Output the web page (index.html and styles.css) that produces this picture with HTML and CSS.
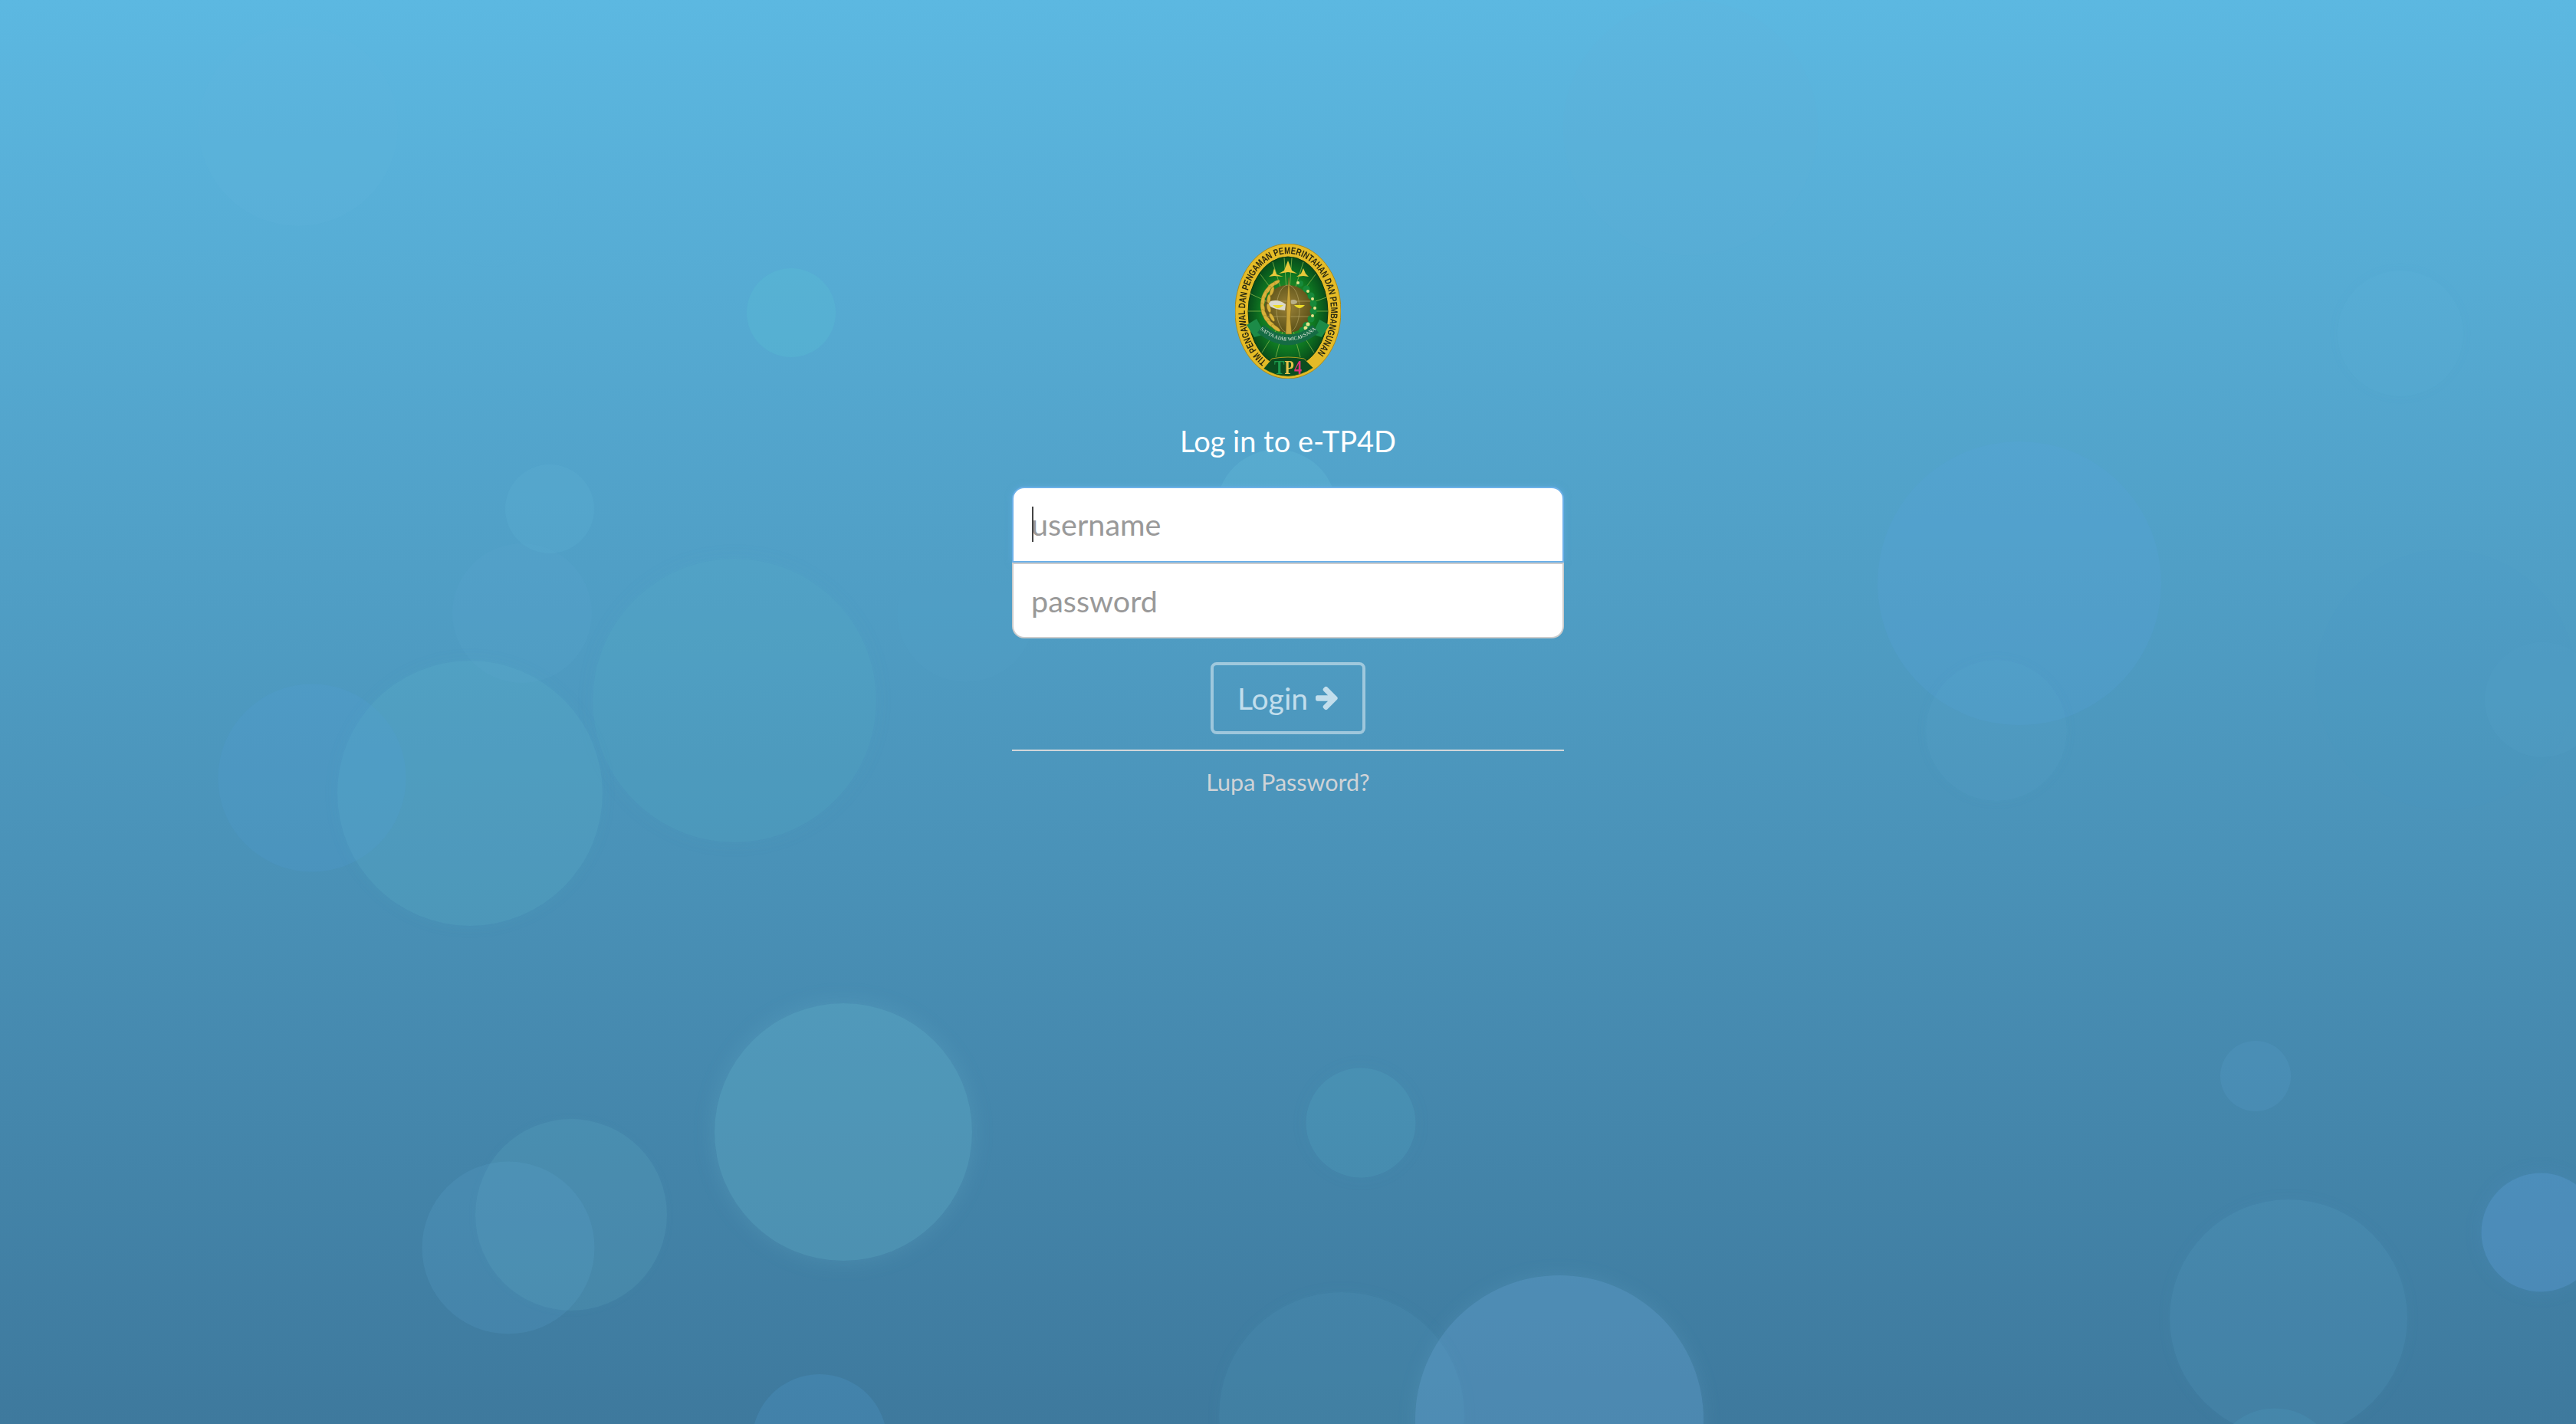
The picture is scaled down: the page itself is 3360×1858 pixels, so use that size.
FILE: index.html
```html
<!DOCTYPE html>
<html>
<head lang="en">
    <meta charset="UTF-8">
    <title>Login e-TP4D</title>
    <link rel="stylesheet" href="styles.css">
</head>
<body>
    <div class="bubbles">
        <div class="bubble b1"></div>
        <div class="bubble b2"></div>
        <div class="bubble b3"></div>
        <div class="bubble b4"></div>
        <div class="bubble b5"></div>
        <div class="bubble b6"></div>
        <div class="bubble b7"></div>
        <div class="bubble b8"></div>
        <div class="bubble b9"></div>
        <div class="bubble b10"></div>
        <div class="bubble b11"></div>
        <div class="bubble b12"></div>
        <div class="bubble b13"></div>
        <div class="bubble b14"></div>
        <div class="bubble b15"></div>
        <div class="bubble b16"></div>
        <div class="bubble b17"></div>
        <div class="bubble b18"></div>
        <div class="bubble b19"></div>
        <div class="bubble b20"></div>
        <div class="bubble b21"></div>
        <div class="bubble b22"></div>
        <div class="bubble b23"></div>
        <div class="bubble b24"></div>
        <div class="bubble b25"></div>
        <div class="bubble b26"></div>
        <div class="bubble b27"></div>
    </div>

    <div class="login-box">
        <svg class="logo" viewBox="51 28 138 176">
            <defs>
                <radialGradient id="greenFill" cx="50%" cy="50%" r="55%">
                    <stop offset="0" stop-color="#3f9a2c"/>
                    <stop offset="0.6" stop-color="#0f7a22"/>
                    <stop offset="1" stop-color="#053f18"/>
                </radialGradient>
                <radialGradient id="globeFill" cx="50%" cy="45%" r="55%">
                    <stop offset="0" stop-color="#9a8238"/>
                    <stop offset="1" stop-color="#5a5018"/>
                </radialGradient>
                <path id="rimPath" d="M92,181 A56,75 0 1 1 148,181"/>
                <path id="ribbonPath" d="M84,139 Q120,168 156,139"/>
            </defs>
            <ellipse cx="120" cy="116" rx="69" ry="88" fill="#e4bb27" stroke="#a98a1c" stroke-width="1"/>
            <ellipse cx="120" cy="117" rx="52" ry="72" fill="url(#greenFill)" stroke="#0b3a12" stroke-width="1"/>
            <text class="rim-text"><textPath href="#rimPath" textLength="338" lengthAdjust="spacingAndGlyphs">TIM PENGAWAL DAN PENGAMAN PEMERINTAHAN DAN PEMBANGUNAN</textPath></text>
            <g stroke="#86b84a" stroke-width="0.8">
                <line x1="120" y1="116" x2="115" y2="46"/>
                <line x1="120" y1="116" x2="125" y2="46"/>
                <line x1="120" y1="116" x2="100" y2="52"/>
                <line x1="120" y1="116" x2="140" y2="52"/>
                <line x1="120" y1="116" x2="84" y2="68"/>
                <line x1="120" y1="116" x2="156" y2="68"/>
                <line x1="120" y1="116" x2="70" y2="93"/>
                <line x1="120" y1="116" x2="170" y2="98"/>
                <line x1="120" y1="116" x2="68" y2="116"/>
                <line x1="120" y1="116" x2="172" y2="116"/>
                <line x1="120" y1="116" x2="86" y2="170"/>
                <line x1="120" y1="116" x2="154" y2="170"/>
                <line x1="120" y1="116" x2="104" y2="176"/>
                <line x1="120" y1="116" x2="136" y2="176"/>
            </g>
            <g fill="#e8c93a">
                <path d="M120,50 L125,63 L132,67 L120,65 L108,67 L115,63 Z"/>
                <path d="M102,60 L105,68 L114,71 L102,70 L95,71 L100,67 Z"/>
                <path d="M140,60 L143,67 L147,71 L140,70 L131,71 L137,67 Z"/>
            </g>
            <circle cx="120" cy="113" r="31" fill="url(#globeFill)"/>
            <g fill="none" stroke="#c8b877" stroke-width="0.5">
                <ellipse cx="120" cy="113" rx="15" ry="31"/>
                <line x1="90" y1="103" x2="150" y2="103"/>
                <line x1="90" y1="123" x2="150" y2="123"/>
            </g>
            <path d="M95,104 Q106,99 117,107 L116,115 Q103,114 95,109 Z" fill="#dcdacb"/>
            <ellipse cx="127" cy="104" rx="5" ry="3" fill="#b9b08a"/>
            <path d="M100,108 L114,108 Q107,116 100,108 Z" fill="#ecdc28"/>
            <path d="M128,108 L142,108 Q135,116 128,108 Z" fill="#ecdc28"/>
            <path d="M121,72 L124,112 L123,126 L125,146 L117,146 L118,126 L118,112 Z" fill="#c9a53a" stroke="#6e5a18" stroke-width="0.5"/>
            <g class="wheat" fill="#d8b23a" stroke="#8a6d1a" stroke-width="0.3">
                <ellipse cx="104" cy="79" rx="6" ry="2.4" transform="rotate(-30 104 79)"/>
                <ellipse cx="98" cy="83" rx="6.5" ry="2.5" transform="rotate(-40 98 83)"/>
                <ellipse cx="93" cy="89" rx="7" ry="2.6" transform="rotate(-50 93 89)"/>
                <ellipse cx="89" cy="96" rx="7" ry="2.6" transform="rotate(-65 89 96)"/>
                <ellipse cx="87" cy="104" rx="7" ry="2.6" transform="rotate(-80 87 104)"/>
                <ellipse cx="87" cy="112" rx="7" ry="2.6" transform="rotate(80 87 112)"/>
                <ellipse cx="89" cy="120" rx="7" ry="2.6" transform="rotate(65 89 120)"/>
                <ellipse cx="93" cy="127" rx="7" ry="2.6" transform="rotate(50 93 127)"/>
                <ellipse cx="98" cy="133" rx="7" ry="2.6" transform="rotate(40 98 133)"/>
                <ellipse cx="99" cy="90" rx="6" ry="2.2" transform="rotate(-70 99 90)"/>
                <ellipse cx="95" cy="100" rx="6" ry="2.2" transform="rotate(-85 95 100)"/>
                <ellipse cx="95" cy="112" rx="6" ry="2.2" transform="rotate(75 95 112)"/>
                <ellipse cx="99" cy="124" rx="6" ry="2.2" transform="rotate(60 99 124)"/>
                <ellipse cx="104" cy="138" rx="7" ry="2.4" transform="rotate(35 104 138)"/>
            </g>
            <g fill="#178a3a">
                <circle cx="136" cy="80" r="4"/>
                <circle cx="144" cy="87" r="4.5"/>
                <circle cx="150" cy="96" r="4.5"/>
                <circle cx="153" cy="106" r="4.5"/>
                <circle cx="153" cy="116" r="4.5"/>
                <circle cx="150" cy="126" r="4.5"/>
                <circle cx="144" cy="135" r="5"/>
                <circle cx="139" cy="141" r="4.5"/>
            </g>
            <g fill="#e8e28a">
                <circle cx="133" cy="79" r="2"/>
                <circle cx="146" cy="90" r="2"/>
                <circle cx="152" cy="100" r="2"/>
                <circle cx="155" cy="112" r="2"/>
                <circle cx="152" cy="122" r="2"/>
                <circle cx="146" cy="133" r="2.5"/>
                <circle cx="143" cy="138" r="2.5"/>
            </g>
            <path d="M66,134 L79,126 L90,146 L76,150 Z" fill="#1c8b48"/>
            <path d="M174,134 L161,127 L152,146 L164,150 Z" fill="#1c8b48"/>
            <use href="#ribbonPath" fill="none" stroke="#156b44" stroke-width="13"/>
            <text class="ribbon-text"><textPath href="#ribbonPath" startOffset="50%" text-anchor="middle">SATYA ADHI WICAKSANA</textPath></text>
            <path d="M88,191 L99,178 Q120,174 141,178 L153,190 Q120,212 88,191 Z" fill="#0a4d1f" stroke="#d8b020" stroke-width="0.8"/>
            <text class="tp4" x="102" y="198" textLength="36" lengthAdjust="spacingAndGlyphs"><tspan fill="#1d9a4c">T</tspan><tspan fill="#e5c34a">P</tspan><tspan fill="#e0307a">4</tspan></text>
        </svg>

        <h1 class="login-title">Log in to e-TP4D</h1>

        <form class="login-form">
            <div class="field-group">
                <input class="field field-focus" type="text" placeholder="username">
                <span class="caret"></span>
                <input class="field field-last" type="password" placeholder="password">
            </div>
            <button class="btn-login" type="button">Login
                <svg class="arrow" viewBox="0 0 1536 1792"><path fill="currentColor" d="M1472 960q0 54-37 91l-651 651q-39 37-91 37-51 0-90-37l-75-75q-38-38-38-91t38-91l293-293h-704q-52 0-84.5-37.5t-32.5-90.5v-128q0-53 32.5-90.5t84.5-37.5h704l-293-294q-38-36-38-90t38-90l75-75q38-38 90-38 53 0 91 38l651 651q37 35 37 90z" transform="translate(0 -64)"/></svg>
            </button>
            <hr class="divider">
            <a class="forgot" href="#">Lupa Password?</a>
        </form>
    </div>
</body>
</html>
```

FILE: styles.css
```css
*{
    margin: 0;
    padding: 0;
    box-sizing: border-box;
}
html, body{
    height: 100%;
}
body{
    position: relative;
    overflow: hidden;
    font-family: "Lato", "Noto Sans", sans-serif;
    background: linear-gradient(180deg, #5cb8e1 0%, #3e799d 100%);
}

/* background bubbles */
.bubbles{
    position: absolute;
    top: 0;
    left: 0;
    right: 0;
    bottom: 0;
    overflow: hidden;
}
.bubble{
    position: absolute;
    border-radius: 50%;
    transform: translate(-50%, -50%);
}
.b1{ left: 389px; top: 165px; width: 260px; height: 260px; background: rgba(110,190,230,.1); }
.b2{ left: 639px; top: 258px; width: 180px; height: 180px; background: rgba(90,185,220,.04); }
.b3{ left: 1032px; top: 408px; width: 116px; height: 116px; background: rgba(90,200,215,.22); }
.b4{ left: 717px; top: 664px; width: 116px; height: 116px; background: rgba(110,190,225,.13); }
.b5{ left: 681px; top: 800px; width: 182px; height: 182px; background: rgba(100,175,215,.12); }
.b6{ left: 958px; top: 914px; width: 370px; height: 370px; background: rgba(90,180,200,.16); box-shadow: 0 0 24px rgba(90,180,200,.08); }
.b7{ left: 613px; top: 1035px; width: 346px; height: 346px; background: rgba(95,185,205,.2); box-shadow: 0 0 20px rgba(95,185,205,.08); }
.b8{ left: 407px; top: 1015px; width: 245px; height: 245px; background: rgba(85,165,225,.14); }
.b9{ left: 1260px; top: 800px; width: 180px; height: 180px; background: rgba(100,170,220,.05); }
.b10{ left: 1665px; top: 665px; width: 157px; height: 157px; background: rgba(110,200,225,.2); }
.b11{ left: 1100px; top: 1477px; width: 336px; height: 336px; background: rgba(110,195,215,.25); box-shadow: 0 0 30px rgba(130,205,225,.16); }
.b12{ left: 745px; top: 1585px; width: 250px; height: 250px; background: rgba(105,190,205,.15); box-shadow: 0 0 12px rgba(105,190,205,.06); }
.b13{ left: 663px; top: 1628px; width: 225px; height: 225px; background: rgba(100,175,220,.16); }
.b14{ left: 1069px; top: 1881px; width: 176px; height: 176px; background: rgba(80,160,215,.22); }
.b15{ left: 1775px; top: 1465px; width: 143px; height: 143px; background: rgba(90,185,210,.17); box-shadow: 0 0 24px rgba(90,185,210,.06); }
.b16{ left: 1750px; top: 1846px; width: 320px; height: 320px; background: rgba(90,175,205,.12); box-shadow: 0 0 20px rgba(90,175,205,.06); }
.b17{ left: 2034px; top: 1852px; width: 376px; height: 376px; background: rgba(115,175,225,.28); box-shadow: 0 0 24px rgba(130,190,230,.14); }
.b18{ left: 2634px; top: 761px; width: 370px; height: 370px; background: rgba(90,165,225,.2); }
.b19{ left: 2604px; top: 953px; width: 184px; height: 184px; background: rgba(100,175,220,.1); box-shadow: 0 0 16px rgba(100,175,220,.05); }
.b20{ left: 3131px; top: 435px; width: 164px; height: 164px; background: rgba(100,190,225,.08); box-shadow: 0 0 16px rgba(100,190,225,.04); }
.b21{ left: 3190px; top: 887px; width: 340px; height: 340px; background: rgba(60,150,200,.06); }
.b22{ left: 3316px; top: 913px; width: 150px; height: 150px; background: rgba(100,175,215,.08); }
.b23{ left: 2205px; top: 167px; width: 333px; height: 333px; background: rgba(110,180,225,.05); }
.b24{ left: 2942px; top: 1404px; width: 92px; height: 92px; background: rgba(100,170,220,.16); }
.b25{ left: 3314px; top: 1608px; width: 155px; height: 155px; background: rgba(95,160,220,.35); box-shadow: 0 0 24px rgba(95,160,220,.12); }
.b26{ left: 2985px; top: 1720px; width: 310px; height: 310px; background: rgba(95,170,205,.16); box-shadow: 0 0 20px rgba(95,170,205,.06); }
.b27{ left: 2967px; top: 1920px; width: 165px; height: 165px; background: rgba(80,165,205,.16); }

/* login column */
.login-box{
    position: relative;
    width: 720px;
    margin: 0 auto;
    padding-top: 318px;
    text-align: center;
}
.logo{
    display: block;
    width: 138px;
    height: 176px;
    margin: 0 auto;
    filter: blur(.4px);
}
.rim-text{
    font-family: "Liberation Sans", sans-serif;
    font-size: 12.5px;
    font-weight: bold;
    fill: #2a2a10;
}
.ribbon-text{
    font-family: "Liberation Serif", serif;
    font-size: 6.5px;
    fill: #f2f2e6;
    dominant-baseline: middle;
}
.tp4{
    font-family: "Liberation Serif", serif;
    font-size: 26px;
    font-weight: bold;
}
.login-title{
    margin-top: 58px;
    font-size: 38px;
    line-height: 46px;
    font-weight: 400;
    color: #fff;
}
.login-form{
    margin-top: 37px;
}
.field-group{
    position: relative;
}
.field{
    display: block;
    width: 100%;
    height: 99px;
    padding: 0 23px;
    font-family: inherit;
    font-size: 39.5px;
    color: #555;
    background: #fff;
    border: 2px solid #ccc;
    outline: none;
}
.field::placeholder{
    color: #999;
    opacity: 1;
}
.field-focus{
    height: 99px;
    padding-bottom: 2px;
    border: 2px solid #6cb0e8;
    border-radius: 16px 16px 0 0;
    box-shadow: 0 0 8px rgba(102,175,233,.5);
}
.field-last{
    border-radius: 0 0 16px 16px;
}
.caret{
    position: absolute;
    top: 26px;
    left: 26px;
    width: 2px;
    height: 46px;
    background: #444;
}
.btn-login{
    display: inline-flex;
    align-items: center;
    justify-content: center;
    gap: 10px;
    width: 202px;
    height: 94px;
    margin-top: 31px;
    font-family: inherit;
    font-size: 39px;
    color: #c2deec;
    background: transparent;
    border: 4px solid rgba(255,255,255,.46);
    border-radius: 8px;
}
.arrow{
    width: 30px;
    height: 36px;
}
.divider{
    height: 2px;
    margin-top: 20px;
    background: #d2d6d9;
    border: 0;
}
.forgot{
    display: block;
    margin-top: 22px;
    font-size: 30.5px;
    line-height: 36px;
    color: #cfd3d7;
    text-decoration: none;
}
```
